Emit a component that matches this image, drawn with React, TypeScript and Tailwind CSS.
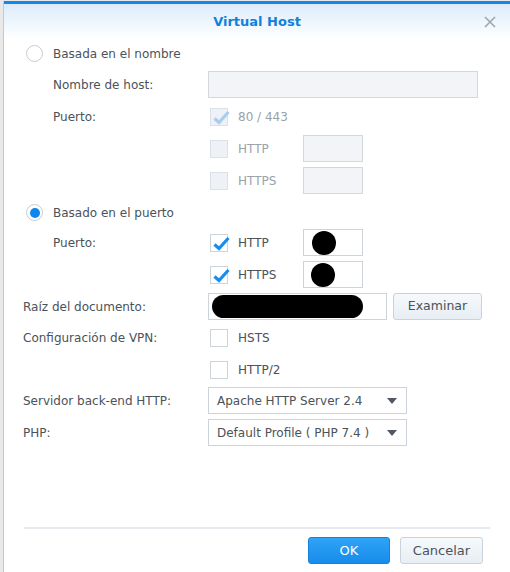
import React from "react";

const font = { fontFamily: '"DejaVu Sans", Verdana, sans-serif' };

function Radio({ checked }: { checked?: boolean }) {
  return (
    <span className="flex h-[17px] w-[17px] shrink-0 items-center justify-center rounded-full border border-[#c6ccd3] bg-white">
      {checked && <span className="h-[10px] w-[10px] rounded-full bg-[#0a86ee]" />}
    </span>
  );
}

function Check({ checked, disabled }: { checked?: boolean; disabled?: boolean }) {
  return (
    <span
      className={
        "relative ml-[2px] flex h-[18px] w-[18px] shrink-0 items-center justify-center border " +
        (disabled ? "border-[#dce1e7] bg-[#eef1f5]" : "border-[#cdd3da] bg-white")
      }
    >
      {checked && (
        <svg width="18" height="16" viewBox="0 0 18 16" className="absolute left-[1px] top-[1px]">
          <path
            d="M2.5 8.5 L7 12.5 L16.5 2"
            fill="none"
            stroke={disabled ? "#a9cdee" : "#1a8cee"}
            strokeWidth="3.2"
            strokeLinecap="butt"
            strokeLinejoin="miter"
          />
        </svg>
      )}
    </span>
  );
}

function Row({ children, className = "" }: { children: React.ReactNode; className?: string }) {
  return <div className={"flex h-[27px] items-center " + className}>{children}</div>;
}

function Arrow() {
  return (
    <svg width="10" height="6" viewBox="0 0 10 6" className="shrink-0">
      <path d="M0 0 L10 0 L5 6 Z" fill="#505a64" />
    </svg>
  );
}

export default function App() {
  return (
    <div className="h-[572px] w-[510px] overflow-hidden bg-[#e9e9e9] text-[12px] text-[#4a525a]" style={font}>
      <div className="ml-[3px] mt-[1px] flex h-[571px] flex-col border-l border-[#c8c8c8] bg-white">
        <div className="h-[3px] bg-[#1488e6]" />
        <div className="relative flex h-[35px] items-center justify-center bg-gradient-to-b from-[#dcecfb] to-white">
          <span className="text-[13px] font-bold text-[#0e82dc]">Virtual Host</span>
          <svg width="12" height="12" viewBox="0 0 12 12" className="absolute right-[14px] top-[12px]">
            <path d="M1 1 L11 11 M11 1 L1 11" stroke="#9ea6ae" strokeWidth="1.6" />
          </svg>
        </div>

        <div className="flex flex-col gap-[5px] pl-[19px] pr-[16px]">
          <Row className="pt-[2px]">
            <span className="ml-[3px] mr-[10px]">
              <Radio />
            </span>
            <span className="text-[12px]">Basada en el nombre</span>
          </Row>
          <Row>
            <span className="w-[185px] pl-[30px]">Nombre de host:</span>
            <div className="h-[27px] w-[270px] border border-[#d2d8de] bg-[#f2f4f7]" />
          </Row>
          <Row>
            <span className="w-[185px] pl-[30px]">Puerto:</span>
            <Check checked disabled />
            <span className="ml-[10px] text-[#9aa2aa]">80 / 443</span>
          </Row>
          <Row>
            <span className="w-[185px]" />
            <div className="flex w-[95px] items-center">
              <Check disabled />
              <span className="ml-[10px] text-[#9aa2aa]">HTTP</span>
            </div>
            <div className="h-[27px] w-[60px] border border-[#d2d8de] bg-[#f2f4f7]" />
          </Row>
          <Row>
            <span className="w-[185px]" />
            <div className="flex w-[95px] items-center">
              <Check disabled />
              <span className="ml-[10px] text-[#9aa2aa]">HTTPS</span>
            </div>
            <div className="h-[27px] w-[60px] border border-[#d2d8de] bg-[#f2f4f7]" />
          </Row>
          <Row>
            <span className="ml-[3px] mr-[10px]">
              <Radio checked />
            </span>
            <span className="text-[12px]">Basado en el puerto</span>
          </Row>
          <Row className="-mt-[2px]">
            <span className="w-[185px] pl-[30px]">Puerto:</span>
            <div className="flex w-[95px] items-center">
              <Check checked />
              <span className="ml-[10px]">HTTP</span>
            </div>
            <div className="flex h-[27px] w-[60px] items-center border border-[#cdd3da] bg-white pl-[8px]">
              <span className="h-[24px] w-[24px] rounded-full bg-black" />
            </div>
          </Row>
          <Row>
            <span className="w-[185px]" />
            <div className="flex w-[95px] items-center">
              <Check checked />
              <span className="ml-[10px]">HTTPS</span>
            </div>
            <div className="flex h-[27px] w-[60px] items-center border border-[#cdd3da] bg-white pl-[7px]">
              <span className="h-[24px] w-[24px] rounded-full bg-black" />
            </div>
          </Row>
          <Row>
            <span className="w-[185px]">Raíz del documento:</span>
            <div className="flex h-[27px] w-[179px] items-center border border-[#cdd3da] bg-white pl-[3px]">
              <span className="h-[23px] w-[151px] rounded-full bg-black" />
            </div>
            <button className="ml-[6px] h-[27px] w-[89px] rounded-[3px] border border-[#c9d3dd] bg-gradient-to-b from-[#f6f9fc] to-[#e8eef4] text-[12.5px] text-[#4a525a]">
              Examinar
            </button>
          </Row>
          <Row className="-mt-[1px]">
            <span className="w-[185px]">Configuración de VPN:</span>
            <Check />
            <span className="ml-[10px]">HSTS</span>
          </Row>
          <Row>
            <span className="w-[185px]" />
            <Check />
            <span className="ml-[10px]">HTTP/2</span>
          </Row>
          <Row className="-mt-[1px]">
            <span className="w-[185px]">Servidor back-end HTTP:</span>
            <div className="flex h-[27px] w-[199px] items-center justify-between border border-[#cdd3da] bg-white pl-[8px] pr-[9px]">
              <span>Apache HTTP Server 2.4</span>
              <Arrow />
            </div>
          </Row>
          <Row>
            <span className="w-[185px]">PHP:</span>
            <div className="flex h-[27px] w-[199px] items-center justify-between border border-[#cdd3da] bg-white pl-[8px] pr-[9px]">
              <span>Default Profile ( PHP 7.4 )</span>
              <Arrow />
            </div>
          </Row>
        </div>

        <div className="mt-auto px-[20px] pb-[8px]">
          <div className="h-[2px] bg-[#e6e9ed]" />
          <div className="mt-[8px] flex justify-end gap-[10px] pr-[7px]">
            <button className="h-[27px] w-[82px] rounded-[3px] border border-[#1681dc] bg-gradient-to-b from-[#2fa3f5] to-[#168ceb] text-[13px] text-white">
              OK
            </button>
            <button className="h-[27px] w-[83px] rounded-[3px] border border-[#c9d3dd] bg-gradient-to-b from-[#f6f9fc] to-[#e8eef4] text-[13px] text-[#4a525a]">
              Cancelar
            </button>
          </div>
        </div>
      </div>
    </div>
  );
}
